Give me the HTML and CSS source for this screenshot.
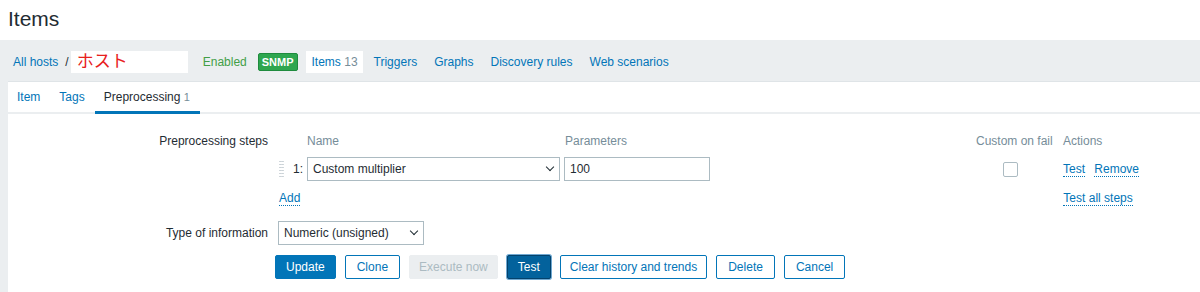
FILE: index.html
```html
<!DOCTYPE html>
<html lang="en">
<head>
    <meta charset="utf-8">
    <title>Items</title>
    <link rel="stylesheet" href="styles.css">
</head>
<body>
    <header class="page-header">
        <h1>Items</h1>
    </header>
    <div class="wrapper">
        <nav class="host-nav">
            <a class="crumb" href="#">All hosts</a>
            <span class="sep">/</span>
            <span class="host-name">ホスト</span>
            <span class="status-green">Enabled</span>
            <span class="badge">SNMP</span>
            <a class="nav-current" href="#">Items <sup>13</sup></a>
            <a class="link" href="#">Triggers</a>
            <a class="link" href="#">Graphs</a>
            <a class="link" href="#">Discovery rules</a>
            <a class="link" href="#">Web scenarios</a>
        </nav>
        <div class="panel">
            <ul class="tabs">
                <li><a href="#">Item</a></li>
                <li><a href="#">Tags</a></li>
                <li class="active"><a href="#">Preprocessing <sup>1</sup></a></li>
            </ul>
            <form class="form">
                <div class="form-row">
                    <label class="form-label">Preprocessing steps</label>
                    <div class="steps">
                        <div class="steps-head">
                            <span class="col-name">Name</span>
                            <span class="col-params">Parameters</span>
                            <span class="col-fail">Custom on fail</span>
                            <span class="col-actions">Actions</span>
                        </div>
                        <div class="step">
                            <span class="drag"></span>
                            <span class="num">1:</span>
                            <div class="select step-select">Custom multiplier<span class="arrow"></span></div>
                            <div class="input step-param">100</div>
                            <span class="col-fail"><span class="checkbox"></span></span>
                            <span class="col-actions">
                                <a class="link-action" href="#">Test</a>
                                <a class="link-action" href="#">Remove</a>
                            </span>
                        </div>
                        <div class="steps-foot">
                            <a class="link-action" href="#">Add</a>
                            <a class="link-action test-all" href="#">Test all steps</a>
                        </div>
                    </div>
                </div>
                <div class="form-row type-row">
                    <label class="form-label">Type of information</label>
                    <div class="select type-select">Numeric (unsigned)<span class="arrow"></span></div>
                </div>
                <div class="buttons">
                    <button type="button" class="btn primary">Update</button>
                    <button type="button" class="btn short">Clone</button>
                    <button type="button" class="btn disabled long">Execute now</button>
                    <button type="button" class="btn focused">Test</button>
                    <button type="button" class="btn long">Clear history and trends</button>
                    <button type="button" class="btn short">Delete</button>
                    <button type="button" class="btn short">Cancel</button>
                </div>
            </form>
        </div>
    </div>
</body>
</html>
```

FILE: styles.css
```css
body {
    margin: 0;
    font-family: "Liberation Sans", Arial, "Noto Sans CJK JP", sans-serif;
    font-size: 12px;
    color: #1f2c33;
    background: #fff;
}
a {
    text-decoration: none;
    color: #0275b8;
}
sup {
    font-size: 11px;
    vertical-align: baseline;
    color: #768d99;
}

.page-header {
    height: 40px;
}
.page-header h1 {
    margin: 0;
    padding: 7px 0 0 8px;
    font-size: 21px;
    font-weight: normal;
    line-height: 24px;
}

.wrapper {
    background: #ebeef0;
    padding-left: 8px;
    height: 252px;
}

.host-nav {
    display: flex;
    align-items: center;
    padding: 3px 0 0 5px;
    border-bottom: 1px solid #dfe4e7;
    box-sizing: border-box;
    height: 42px;
}
.host-nav .sep {
    margin: 0 2px 0 7px;
    color: #1f2c33;
}
.host-name {
    background: #fff;
    width: 111px;
    height: 22px;
    line-height: 22px;
    padding-left: 6px;
    color: #e8201c;
    font-size: 17px;
    margin-right: 15px;
}
.status-green {
    color: #429e47;
    margin-right: 11px;
}
.badge {
    background: #2ea64f;
    color: #fff;
    font-weight: bold;
    font-size: 11px;
    padding: 2px 3px;
    border-radius: 2px;
    border: 1px solid #1f8b3e;
    margin-right: 8px;
}
.nav-current {
    background: #fff;
    padding: 4px 5px 4px 6px;
    margin-right: 11px;
}
.nav-current sup {
    font-size: 12px;
}
.host-nav .link {
    margin-right: 17px;
}

.panel {
    background: #fff;
    height: 210px;
}
.tabs {
    list-style: none;
    margin: 0;
    padding: 0;
    display: flex;
    height: 30px;
    border-bottom: 2px solid #ebeef0;
}
.tabs li {
    padding: 0 10px 0 9px;
    line-height: 30px;
}
.tabs li.active {
    border-bottom: 3px solid #0275b8;
    margin-bottom: -2px;
}
.tabs li.active a {
    color: #1f2c33;
}

.form {
    padding-top: 19px;
}
.form-row {
    display: flex;
}
.form-label {
    width: 260px;
    text-align: right;
    padding-right: 10px;
    line-height: 16px;
}
.steps {
    flex: 1;
}
.steps-head {
    display: flex;
    color: #768d99;
    line-height: 16px;
}
.steps-head .col-name {
    margin-left: 29px;
    width: 258px;
}
.steps-head .col-params {
    width: 411px;
}
.col-fail {
    width: 87px;
}
.step {
    display: flex;
    align-items: center;
    margin-top: 8px;
    height: 24px;
}
.drag {
    width: 5px;
    height: 18px;
    margin-left: 1px;
    background-image: radial-gradient(circle, #c8d0d5 0.8px, transparent 1px);
    background-size: 2.5px 3px;
}
.num {
    margin-left: 9px;
    width: 14px;
}
.select, .input {
    box-sizing: border-box;
    height: 24px;
    border: 1px solid #acbbc2;
    padding-left: 5px;
    line-height: 22px;
    position: relative;
}
.arrow {
    position: absolute;
    right: 6px;
    top: 6px;
    width: 5px;
    height: 5px;
    border-right: 1px solid #1f2c33;
    border-bottom: 1px solid #1f2c33;
    transform: rotate(45deg);
}
.step-select {
    width: 253px;
}
.step-param {
    width: 146px;
    margin-left: 4px;
    margin-right: 266px;
}
.step .col-fail {
    display: flex;
    box-sizing: border-box;
    width: 87px;
    padding-left: 27px;
}
.checkbox {
    width: 13px;
    height: 13px;
    border: 1px solid #acbbc2;
    border-radius: 2px;
}
.step .col-actions .link-action {
    margin-right: 6px;
}
.link-action {
    border-bottom: 1px dotted #0275b8;
}
.steps-foot {
    display: flex;
    margin-top: 10px;
    line-height: 14px;
    padding-left: 1px;
}
.test-all {
    margin-left: 763px;
}

.type-row {
    margin-top: 15px;
    align-items: center;
}
.type-select {
    width: 146px;
}
.buttons {
    display: flex;
    gap: 9px;
    padding-left: 267px;
    margin-top: 10px;
}
.btn {
    font-family: inherit;
    font-size: 12px;
    height: 24px;
    padding: 0 10px;
    background: #fff;
    color: #0275b8;
    border: 1px solid #0275b8;
    border-radius: 2px;
}
.btn.short {
    padding: 0 11px;
}
.btn.long {
    padding: 0 9px;
}
.btn.primary {
    background: #0275b8;
    color: #fff;
}
.btn.focused {
    background: #03629c;
    border-color: #03426c;
    color: #fff;
    box-shadow: 0 0 0 1px #6fa8d1;
}
.btn.disabled {
    background: #ebeef0;
    border-color: #ebeef0;
    color: #acbbc2;
}
```
